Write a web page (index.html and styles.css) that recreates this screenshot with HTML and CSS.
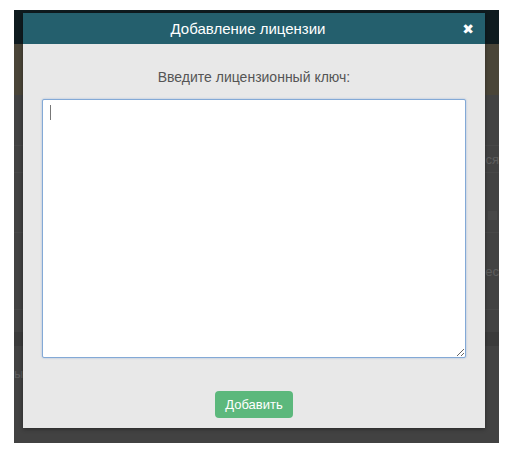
FILE: index.html
```html
<!DOCTYPE html>
<html lang="ru">
<head>
  <meta charset="UTF-8" />
  <title>Добавление лицензии</title>
  <link rel="stylesheet" href="styles.css">
</head>
<body>

  <div class="app">
    <!-- page behind the dialog, dimmed -->
    <div class="app-top"></div>
    <div class="app-banner"></div>
    <div class="app-rows">
      <div class="row row-gap"></div>
      <div class="row row-right"><span>ся</span></div>
      <div class="row row-dot"><span class="dot"></span></div>
      <div class="row row-right row-split"><span>ес</span></div>
      <div class="row row-low"></div>
      <div class="row row-left"><span>ы</span></div>
    </div>

    <!-- Dialog -->
    <div class="modal">
      <div class="modal-header">
        <span class="modal-title">Добавление лицензии</span>
        <span class="modal-close">&#x2716;</span>
      </div>
      <div class="modal-body">
        <label class="key-label" for="licenseKey">Введите лицензионный ключ:</label>
        <div class="key-box">
          <textarea id="licenseKey" class="key-input"></textarea>
          <span class="caret"></span>
        </div>
        <div class="modal-actions">
          <button class="btn-add">Добавить</button>
        </div>
      </div>
    </div>
  </div>

</body>
</html>
```

FILE: styles.css
```css
body {
  margin: 0;
  padding: 10px 0 0 14px;
  background: #fff;
  font-family: "Liberation Sans", Arial, sans-serif;
}

.app {
  position: relative;
  width: 485px;
  height: 433px;
  background: #424242;
  overflow: hidden;
}

.app-top {
  height: 34px;
  background: #0f1b1f;
}

.app-banner {
  height: 51px;
  background: #4a4538;
}

.app-rows {
  display: flex;
  flex-direction: column;
  color: #5e5e5e;
  font-size: 13px;
}

.row {
  height: 26px;
  border-bottom: 1px solid #484848;
  display: flex;
  align-items: center;
}

.row-gap {
  height: 50px;
}

.row-right {
  justify-content: flex-end;
}

.row-dot {
  height: 60px;
  justify-content: flex-end;
  align-items: flex-end;
  padding: 0 2px 12px 0;
  box-sizing: border-box;
}

.dot {
  width: 9px;
  height: 9px;
  background: #484848;
}

.row-split {
  height: 76px;
}

.row-low {
  height: 22px;
  border-bottom: 14px solid #3b3b3b;
}

.row-left {
  height: 54px;
  border: none;
}

/* dialog */
.modal {
  position: absolute;
  left: 9px;
  top: 3px;
  width: 462px;
  height: 415px;
  background: #e8e8e8;
  box-shadow: 0 1px 4px rgba(0, 0, 0, 0.4);
  display: flex;
  flex-direction: column;
}

.modal-header {
  position: relative;
  height: 31px;
  background: #245f6d;
  color: #fff;
  display: flex;
  align-items: center;
  justify-content: center;
}

.modal-title {
  font-size: 15px;
  margin-left: -12px;
}

.modal-close {
  position: absolute;
  right: 11px;
  top: 8px;
  font-size: 14px;
  font-weight: bold;
  font-family: "DejaVu Sans", sans-serif;
}

.modal-body {
  flex: 1;
  display: flex;
  flex-direction: column;
  align-items: center;
  padding: 25px 19px 0;
}

.key-label {
  font-size: 14px;
  color: #555;
  margin-bottom: 14px;
}

.key-box {
  position: relative;
  width: 424px;
  height: 259px;
}

.key-input {
  display: block;
  box-sizing: border-box;
  width: 100%;
  height: 100%;
  margin: 0;
  border: 1px solid #83a9d6;
  border-radius: 2px;
  background: #fff;
  box-shadow: 0 0 2px rgba(102, 150, 210, 0.6);
  outline: none;
  resize: vertical;
}

.caret {
  position: absolute;
  left: 8px;
  top: 6px;
  width: 1px;
  height: 15px;
  background: #777;
}

.modal-actions {
  margin-top: 33px;
}

.btn-add {
  width: 78px;
  height: 27px;
  padding: 0;
  font-family: inherit;
  font-size: 13px;
  color: #fff;
  background: #5cb87c;
  border: none;
  border-radius: 4px;
  cursor: pointer;
}
```
